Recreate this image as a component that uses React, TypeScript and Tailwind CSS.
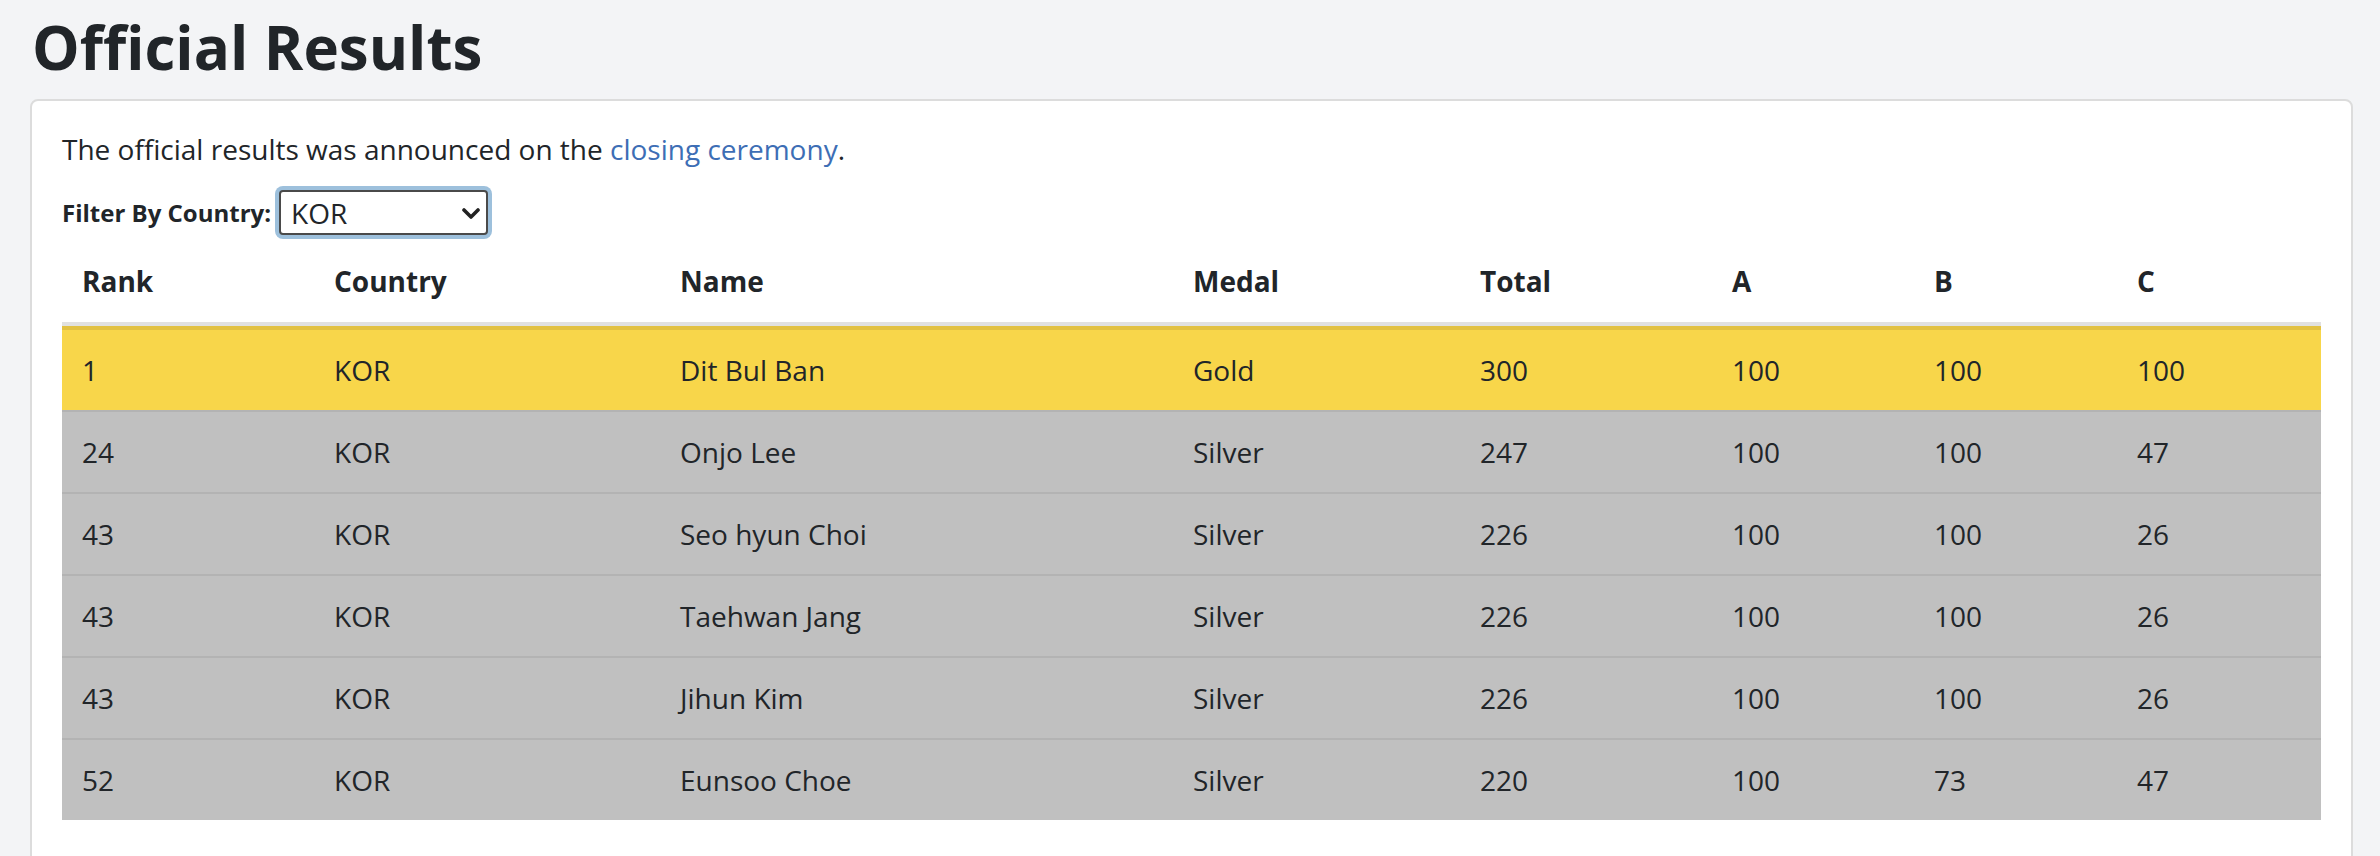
import React from 'react';

const results = [
  { rank: 1, country: 'KOR', name: 'Dit Bul Ban', medal: 'Gold', total: 300, a: 100, b: 100, c: 100 },
  { rank: 24, country: 'KOR', name: 'Onjo Lee', medal: 'Silver', total: 247, a: 100, b: 100, c: 47 },
  { rank: 43, country: 'KOR', name: 'Seo hyun Choi', medal: 'Silver', total: 226, a: 100, b: 100, c: 26 },
  { rank: 43, country: 'KOR', name: 'Taehwan Jang', medal: 'Silver', total: 226, a: 100, b: 100, c: 26 },
  { rank: 43, country: 'KOR', name: 'Jihun Kim', medal: 'Silver', total: 226, a: 100, b: 100, c: 26 },
  { rank: 52, country: 'KOR', name: 'Eunsoo Choe', medal: 'Silver', total: 220, a: 100, b: 73, c: 47 },
];

const headers = ['Rank', 'Country', 'Name', 'Medal', 'Total', 'A', 'B', 'C'];
const widths = ['w-[252px]', 'w-[346px]', 'w-[513px]', 'w-[287px]', 'w-[252px]', 'w-[202px]', 'w-[203px]', 'w-[204px]'];

export default function App() {
  return (
    <div className="min-h-screen bg-[#f3f4f6] pl-[30px] pr-[27px] font-['Open_Sans',sans-serif] text-[#212529]">
      <h1 className="ml-[2px] pt-[11px] mb-[16px] text-[60px] leading-[72px] font-bold">Official Results</h1>

      <div className="bg-white border-2 border-[#dcdcdc] rounded-[8px] px-[30px] pt-[29px] pb-[60px]">
        <p className="text-[28px] leading-[38px] mb-[22px]">
          The official results was announced on the{' '}
          <a href="#" className="text-[#3d6eb5]">closing ceremony</a>.
        </p>

        {/* filter */}
        <div className="flex items-center gap-[8px] h-[45px]">
          <label className="text-[24px] leading-[32px] font-bold">Filter By Country:</label>
          <div className="relative">
            <select
              defaultValue="KOR"
              className="appearance-none w-[209px] h-[45px] pl-[10px] pr-[30px] bg-white border-2 border-[#4a4a4a] rounded-[4px] text-[28px] leading-[38px] text-[#212529] shadow-[0_0_0_4px_#9dc0dc] outline-none"
            >
              <option>ALL</option>
              <option>KOR</option>
              <option>USA</option>
              <option>JPN</option>
            </select>
            <svg
              className="absolute right-[8px] top-[18px] pointer-events-none"
              width="18"
              height="11"
              viewBox="0 0 18 11"
              fill="none"
            >
              <polyline points="2,2 9,9 16,2" stroke="#222" strokeWidth="3.6" strokeLinecap="round" strokeLinejoin="round" />
            </svg>
          </div>
        </div>

        <table className="mt-[5px] w-full table-fixed border-separate border-spacing-0 text-[28px] leading-[38px]">
          <colgroup>
            {widths.map((w, i) => (
              <col key={i} className={w} />
            ))}
          </colgroup>
          <thead>
            <tr>
              {headers.map((h) => (
                <th key={h} className="text-left font-bold pl-[20px] py-[22px] border-b-4 border-[#e1e1e1]">
                  {h}
                </th>
              ))}
            </tr>
          </thead>
          <tbody>
            {results.map((r, i) => {
              const cell =
                i === 0
                  ? 'pl-[20px] py-[21px] bg-[#f8d64a] border-t-4 border-[#e2c143]'
                  : 'pl-[20px] py-[21px] bg-[#c0c0c0] border-t-2 border-[#b3b3b3]';
              return (
                <tr key={i}>
                  <td className={cell}>{r.rank}</td>
                  <td className={cell}>{r.country}</td>
                  <td className={cell}>{r.name}</td>
                  <td className={cell}>{r.medal}</td>
                  <td className={cell}>{r.total}</td>
                  <td className={cell}>{r.a}</td>
                  <td className={cell}>{r.b}</td>
                  <td className={cell}>{r.c}</td>
                </tr>
              );
            })}
          </tbody>
        </table>
      </div>
    </div>
  );
}
